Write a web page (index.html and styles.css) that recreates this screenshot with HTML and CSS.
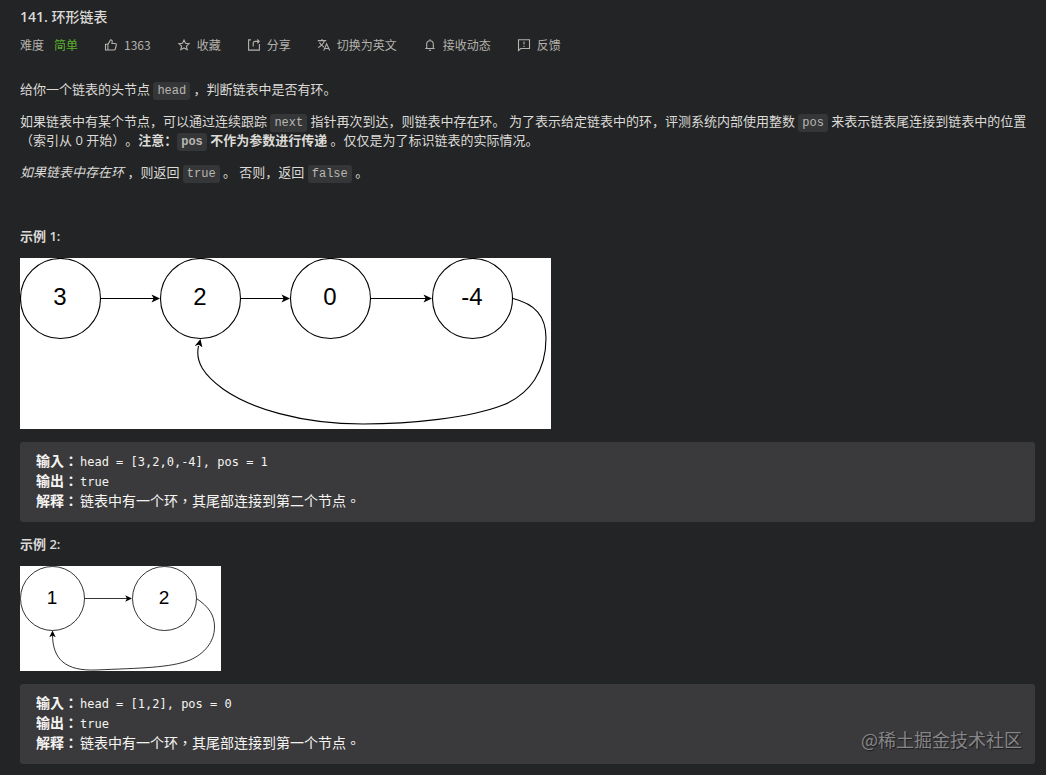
FILE: index.html
```html
<!DOCTYPE html>
<html lang="zh-CN">
<head>
  <meta charset="UTF-8" />
  <meta name="viewport" content="width=device-width, initial-scale=1" />
  <title>141. 环形链表</title>
  <link rel="stylesheet" href="styles.css">
</head>
<body>
  <main class="problem">
    <h1 class="title"><span class="number">141.</span> 环形链表</h1>

    <div class="toolbar">
      <div class="difficulty"><span>难度</span><span class="easy">简单</span></div>
      <button type="button">
        <svg class="icon" viewBox="0 0 14 14"><path d="M1.5 6.200h2.400v5.800H1.500zM3.900 6.400 6.600 1.800c1.200 0 1.800.8 1.600 1.900L7.900 5.500h3.200c.9 0 1.400.7 1.200 1.500l-1 4c-.2.700-.6 1-1.300 1H3.900"/></svg>
        1363
      </button>
      <button type="button">
        <svg class="icon" viewBox="0 0 14 14"><path d="m7 2 1.500 3.300 3.600.4-2.700 2.400.8 3.600L7 9.900l-3.200 1.800.8-3.600-2.700-2.400 3.600-.4z"/></svg>
        收藏
      </button>
      <button type="button">
        <svg class="icon" viewBox="0 0 14 14"><path d="M4 1.900H1.600v10.200h10.800V6M6.200 8.600V5.200c0-1.200.7-1.800 1.900-1.800h3.700M10.300 1.500l1.900 1.900-1.900 1.900"/></svg>
        分享
      </button>
      <button type="button">
        <svg class="icon" viewBox="0 0 14 14"><path d="M.8 2.600h8.400M5 1v1.600M7.400 2.600C6.600 5.400 4.200 7.900 1.200 9.400M2.500 4.500c.8 1.800 2.400 3.400 4.300 4.400M6.700 12.600l2.900-6.800 3.100 6.800M7.700 10.500h4"/></svg>
        切换为英文
      </button>
      <button type="button">
        <svg class="icon" viewBox="0 0 14 14"><path d="M2.300 10.500h9.400M3.700 10.500V6c0-1.900 1.300-3.300 3.300-3.300s3.300 1.400 3.300 3.300v4.500M7 1.300v1.400M5.900 12.300h2.200"/></svg>
        接收动态
      </button>
      <button type="button">
        <svg class="icon" viewBox="0 0 14 14"><path d="M1.500 1.700h11v8.800H3.700l-2.200 2zM7 3.600v2.900M7 7.700v1.200"/></svg>
        反馈
      </button>
    </div>

    <div class="content">
      <p>给你一个链表的头节点 <code>head</code> ，判断链表中是否有环。</p>
      <p>如果链表中有某个节点，可以通过连续跟踪 <code>next</code> 指针再次到达，则链表中存在环。 为了表示给定链表中的环，评测系统内部使用整数 <code>pos</code> 来表示链表尾连接到链表中的位置（索引从 0 开始）。<strong>注意：<code>pos</code> 不作为参数进行传递 </strong>。仅仅是为了标识链表的实际情况。</p>
      <p><em>如果链表中存在环</em> ，则返回 <code>true</code> 。 否则，返回 <code>false</code> 。</p>

      <h2 class="example first">示例 1:</h2>
      <svg class="diagram" width="531" height="171" viewBox="0 0 531 171" font-size="24">
        <g class="node">
          <circle cx="40.5" cy="40.5" r="40"/>
          <circle cx="180.5" cy="40.5" r="40"/>
          <circle cx="310.5" cy="40.5" r="40"/>
          <circle cx="452.5" cy="40.5" r="40"/>
          <path d="M80.500 40.500H135M220.500 40.500H265M350.500 40.500H407"/>
          <path d="M493 40.500C515 46 526 58 526 80C526 113 510 136 483 147C450 160 390 166 343 166C280 166 230 150 203 131C184 117 175 104 178.500 88"/>
        </g>
        <path d="m140 40.500-8.500-4 2.200 4-2.200 4zM270 40.500l-8.500-4 2.200 4-2.200 4zM412 40.500l-8.500-4 2.200 4-2.200 4zM180.500 81l-5.800 7 4-1.200 3.600 2.500z"/>
        <text x="40" y="47">3</text>
        <text x="180" y="47">2</text>
        <text x="310" y="47">0</text>
        <text x="452" y="47">-4</text>
      </svg>
      <pre lang="zh-TW"><strong>输入：</strong>head = [3,2,0,-4], pos = 1
<strong>输出：</strong>true
<strong>解释：</strong><span>链表中有一个环，其尾部连接到第二个节点。</span></pre>

      <h2 class="example">示例 2:</h2>
      <svg class="diagram" width="201" height="105" viewBox="0 0 201 105" font-size="19">
        <g class="node thin">
          <circle cx="32.5" cy="32.5" r="32"/>
          <circle cx="144.5" cy="32.5" r="32"/>
          <path d="M64.500 32.500H108"/>
          <path d="M176.500 32.500C189 41 194.500 49 194.500 61C194.500 76 184 88 170 94C150 102 120 102 76 104C46 105 32.500 94 32.500 68"/>
        </g>
        <path d="m112 32.500-6.800-3.200 1.700 3.200-1.700 3.200zM32.500 64.500l-3.200 6.800 3.200-1.700 3.200 1.700z"/>
        <text x="32" y="38">1</text>
        <text x="144" y="38">2</text>
      </svg>
      <pre lang="zh-TW"><strong>输入：</strong>head = [1,2], pos = 0
<strong>输出：</strong>true
<strong>解释：</strong><span>链表中有一个环，其尾部连接到第一个节点。</span></pre>
    </div>

    <div class="watermark">@稀土掘金技术社区</div>
  </main>
</body>
</html>
```
FILE: styles.css
```css
* {
  box-sizing: border-box;
}
body {
  margin: 0;
  background: #222425;
  color: #dcdad7;
  font-family: "Open Sans", "Noto Sans CJK SC", sans-serif;
  font-size: 13px;
  line-height: 19px;
  text-spacing-trim: space-all;
}
.problem {
  position: relative;
  padding: 7px 11px 11px 20px;
}
.title {
  margin: 0 0 8px;
  font-size: 14px;
  font-weight: 500;
  line-height: 20px;
}
.number {
  font-weight: 600;
}

/* difficulty + action buttons */
.toolbar {
  display: flex;
  flex-wrap: wrap;
  gap: 0 26px;
  font-family: "Noto Sans CJK SC", sans-serif;
  font-size: 12px;
  line-height: 20px;
  color: #b5b2ad;
}
.difficulty {
  display: flex;
  gap: 10px;
}
.easy {
  color: #5aae2c;
}
.toolbar button {
  display: flex;
  align-items: center;
  gap: 6px;
  padding: 0;
  border: 0;
  background: none;
  color: inherit;
  font: inherit;
  cursor: pointer;
}
.icon {
  width: 14px;
  height: 14px;
  fill: none;
  stroke: currentColor;
  stroke-width: 1.1;
}

.content {
  padding-top: 25px;
}
.content p {
  margin: 0 0 13px;
}
.content code {
  padding: 2px 4px;
  border-radius: 3px;
  background: #353638;
  color: #b9b6b1;
  font-family: "Liberation Mono", monospace;
  font-size: 12px;
  line-height: 16px;
}
.example {
  margin: 13px 0 12px;
  font-size: 13px;
  font-weight: 600;
  line-height: 19px;
}
.example.first {
  margin-top: 45px;
}

/* linked list drawings */
.diagram {
  display: block;
  background: #fff;
  font-family: "Liberation Sans", sans-serif;
  text-anchor: middle;
}
.node {
  fill: none;
  stroke: #000;
  stroke-width: 1.1;
}
.thin {
  stroke-width: 0.8;
}

pre {
  margin: 13px 0;
  padding: 10px 16px;
  border-radius: 3px;
  background: #3a3a3c;
  color: #f5f4f2;
  font-family: "DejaVu Sans Mono", "Noto Sans CJK TC", monospace;
  font-size: 12px;
  line-height: 20px;
  white-space: pre-wrap;
}
pre:last-child {
  margin-bottom: 0;
}
pre strong,
pre span {
  font-family: "Noto Sans CJK TC", sans-serif;
  font-size: 14px;
  line-height: 1;
}
pre strong {
  margin-right: 2px;
}

.watermark {
  position: absolute;
  right: 24px;
  bottom: 24px;
  color: #858688;
  font-family: "Noto Sans CJK SC", sans-serif;
  font-size: 18px;
  line-height: 24px;
  text-shadow: 1px 1px 1px #1c1c1d;
}
```
